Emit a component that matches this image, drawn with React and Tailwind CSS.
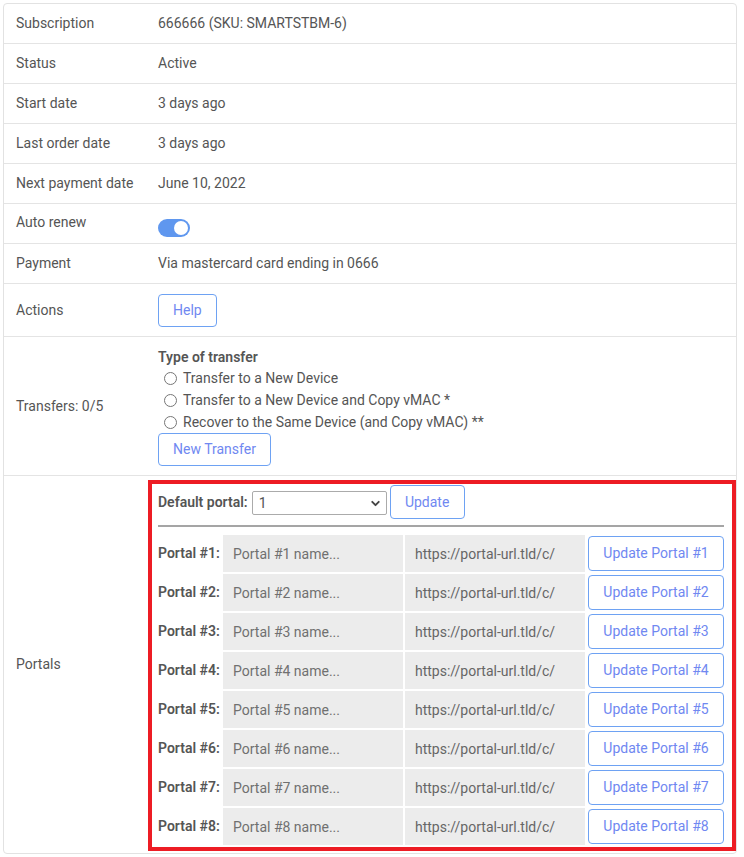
import React, { useState } from 'react';
import { ChevronDown } from 'lucide-react';

const portals = [1, 2, 3, 4, 5, 6, 7, 8];

const btn =
  'border border-[#6ea2f3] rounded-[4px] bg-white text-[#7088f1] leading-[21px] hover:bg-[#f3f7ff]';

function Row({ label, children, first, center, valueClass = 'py-[9px]', labelClass = 'py-[9px]' }) {
  return (
    <div className={`flex ${first ? '' : 'border-t border-[#e4e4e4]'}`}>
      <div className={`w-[142px] shrink-0 pl-3 leading-[21px] ${center ? 'self-center' : ''} ${labelClass}`}>
        {label}
      </div>
      <div className={`flex-1 pl-3 leading-[21px] ${valueClass}`}>{children}</div>
    </div>
  );
}

export default function App() {
  const [autoRenew, setAutoRenew] = useState(true);
  const [transfer, setTransfer] = useState('');
  const [defaultPortal, setDefaultPortal] = useState('1');

  return (
    <div className="min-h-screen bg-white font-['Roboto','Liberation_Sans',sans-serif] text-[14px] text-[#555]">
      <div className="w-[734px] ml-[3px] pt-[3px]">
        <div className="border border-[#e2e2e2] rounded-[4px]">
          <Row label="Subscription" first>666666 (SKU: SMARTSTBM-6)</Row>
          <Row label="Status">Active</Row>
          <Row label="Start date">3 days ago</Row>
          <Row label="Last order date">3 days ago</Row>
          <Row label="Next payment date">June 10, 2022</Row>
          <Row label="Auto renew" valueClass="pt-[15px] pb-[6px]" labelClass="py-[8px]">
            <button
              onClick={() => setAutoRenew(v => !v)}
              className={`relative block w-[32px] h-[18px] rounded-full ${autoRenew ? 'bg-[#5f97ef]' : 'bg-[#c8c8c8]'}`}
            >
              <span
                className={`absolute top-[2px] w-[14px] h-[14px] rounded-full bg-white ${autoRenew ? 'left-[16px]' : 'left-[2px]'}`}
              />
            </button>
          </Row>
          <Row label="Payment">Via mastercard card ending in 0666</Row>
          <Row label="Actions" center valueClass="pt-[10px] pb-[9px]">
            <button className={`${btn} h-[33px] px-[14px]`}>Help</button>
          </Row>
          <Row label="Transfers: 0/5" center valueClass="pt-[10px] pb-[9px]">
            <div className="font-semibold leading-[20px]">Type of transfer</div>
            {[
              'Transfer to a New Device',
              'Transfer to a New Device and Copy vMAC *',
              'Recover to the Same Device (and Copy vMAC) **',
            ].map(t => (
              <label key={t} className="flex items-center h-[22px]">
                <input
                  type="radio"
                  name="transfer"
                  checked={transfer === t}
                  onChange={() => setTransfer(t)}
                  className="w-[13px] h-[13px] ml-[6px] mr-[6px]"
                />
                {t}
              </label>
            ))}
            <button className={`${btn} h-[33px] px-[14px]`}>New Transfer</button>
          </Row>
          <Row label="Portals" center valueClass="pt-[4px] pb-[2px] !pl-[2px]">
            <div className="border-4 border-[#ed1c24] pt-[1px] pl-[6px] pr-[8px] pb-[2px]">
              <div className="flex items-center">
                <span className="font-semibold mr-[4px]">Default portal:</span>
                <div className="relative mt-[2px]">
                  <select
                    value={defaultPortal}
                    onChange={e => setDefaultPortal(e.target.value)}
                    className="appearance-none w-[135px] h-[24px] border border-[#ababab] rounded-[2px] pl-[6px] text-[#555] bg-white"
                  >
                    {portals.map(p => (
                      <option key={p} value={p}>{p}</option>
                    ))}
                  </select>
                  <ChevronDown
                    size={13}
                    strokeWidth={3.5}
                    className="absolute right-[5px] top-[6px] text-[#444] pointer-events-none"
                  />
                </div>
                <button className={`${btn} h-[34px] w-[75px] ml-[3px]`}>Update</button>
              </div>
              <div className="mt-[6px] mb-[8px] border-t-2 border-[#a5a5a5]" />
              <div className="flex flex-col gap-[2px]">
                {portals.map(n => (
                  <div key={n} className="flex items-center h-[37px]">
                    <span className="w-[65px] shrink-0 font-semibold">Portal #{n}:</span>
                    <input
                      placeholder={`Portal #${n} name...`}
                      className="w-[180px] h-[37px] bg-[#ececec] pl-[10px] text-[#555] placeholder:text-[#707070] outline-none"
                    />
                    <input
                      defaultValue="https://portal-url.tld/c/"
                      className="w-[180px] h-[37px] ml-[2px] bg-[#ececec] pl-[10px] text-[#666] outline-none"
                    />
                    <button className={`${btn} h-[35px] w-[136px] ml-[3px]`}>Update Portal #{n}</button>
                  </div>
                ))}
              </div>
            </div>
          </Row>
        </div>
      </div>
    </div>
  );
}
